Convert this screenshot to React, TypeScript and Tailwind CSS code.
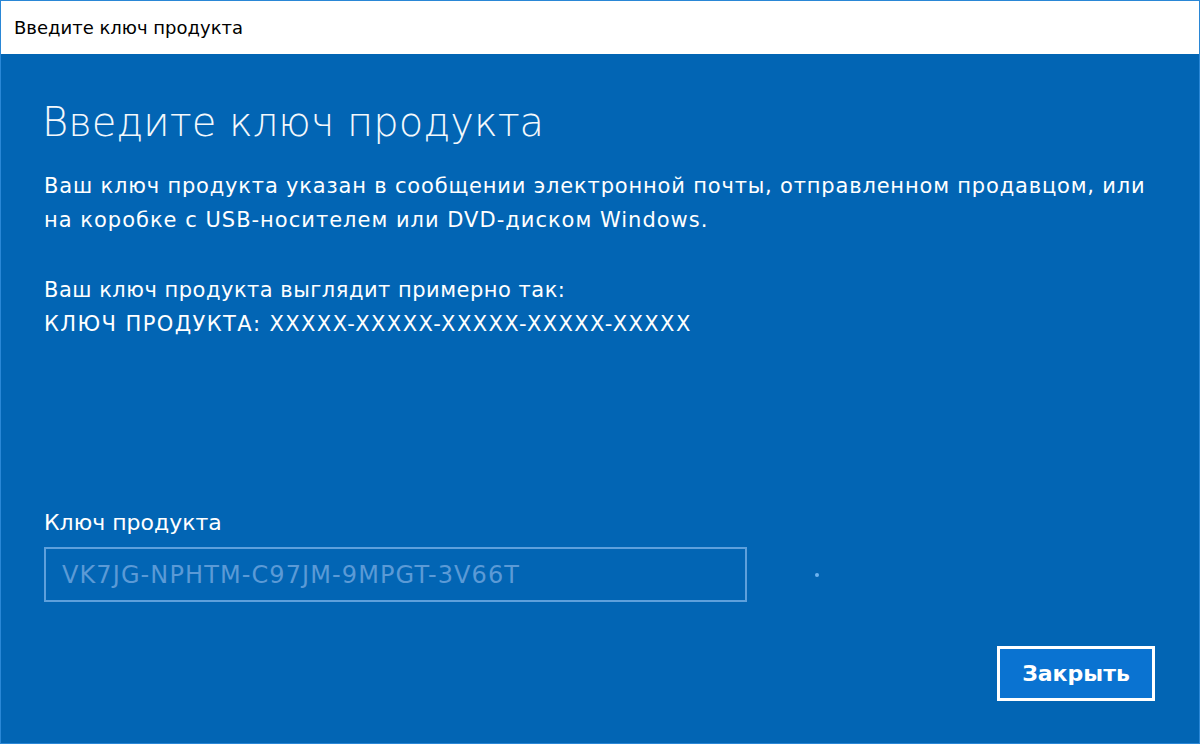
const font = { fontFamily: '"DejaVu Sans", "Noto Sans", sans-serif' }

export default function App() {
    return (
        <div
            className="w-[1200px] h-[744px] flex flex-col border border-[#2a87d6] overflow-hidden"
            style={font}
        >
            {/* Title bar */}
            <div className="h-[53px] shrink-0 bg-white flex items-center pl-[13px] text-[18px] text-black">
                Введите ключ продукта
            </div>

            {/* Body */}
            <div className="flex-1 bg-[#0265b4] text-white flex flex-col px-[41px]">
                <h1 className="mt-[44px] text-[40px] leading-[48px] font-light text-[#f3f8fc]">
                    Введите ключ продукта
                </h1>

                <p className="mt-[23px] text-[21px] leading-[34px] pl-[2px]">
                    <span className="tracking-[0.82px]">
                        Ваш ключ продукта указан в сообщении электронной почты, отправленном продавцом, или
                    </span>
                    <br />
                    <span className="tracking-[1px]">на коробке с USB-носителем или DVD-диском Windows.</span>
                </p>

                <p className="mt-[36px] text-[21px] leading-[34px] pl-[2px]">
                    <span className="tracking-[0.5px]">Ваш ключ продукта выглядит примерно так:</span>
                    <br />
                    <span className="tracking-[1.4px]">КЛЮЧ ПРОДУКТА: XXXXX-XXXXX-XXXXX-XXXXX-XXXXX</span>
                </p>

                <label className="mt-[168px] text-[22px] leading-[28px] pl-[2px]">Ключ продукта</label>

                <div className="mt-[10px] flex items-center pl-[2px]">
                    <div className="w-[703px] h-[55px] border-2 border-[#5ea0dc] flex items-center px-[16px] text-[24px] tracking-[1.1px] text-[#5b9ad6]">
                        VK7JG-NPHTM-C97JM-9MPGT-3V66T
                    </div>
                    <div className="ml-[68px] w-[4px] h-[4px] rounded-full bg-[#6db3ef]" />
                </div>

                <div className="mt-[44px] flex justify-end pr-[3px]">
                    <button className="w-[158px] h-[55px] border-[3px] border-white bg-[#0a73d1] text-[22px] font-semibold text-white flex items-center justify-center">
                        Закрыть
                    </button>
                </div>
            </div>
        </div>
    )
}
